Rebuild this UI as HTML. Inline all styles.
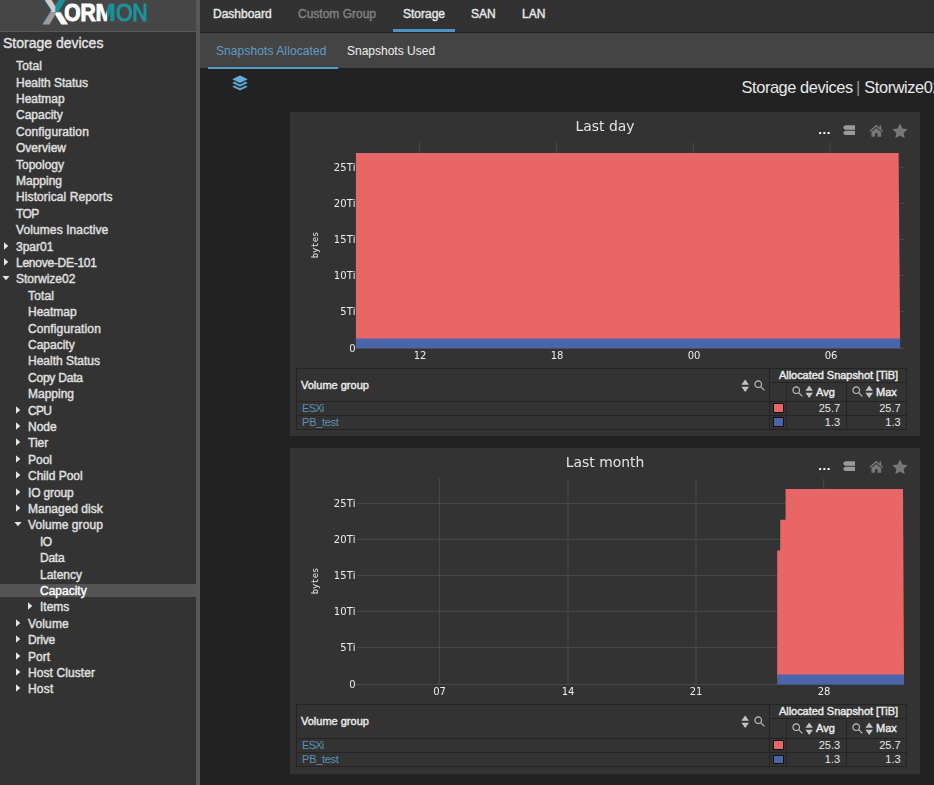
<!DOCTYPE html>
<html lang="en"><head><meta charset="utf-8"><title>XorMon - Storage devices | Storwize02</title>
<style>
*{box-sizing:border-box}
html,body{margin:0;padding:0}
body{width:934px;height:785px;overflow:hidden;background:#222;font-family:"Liberation Sans",Arial,sans-serif;font-size:12px;color:#e6e6e6;position:relative}
#side{position:absolute;left:0;top:0;width:196px;height:785px;background:#333;overflow:hidden}
#logo{position:absolute;left:0;top:0;width:196px;height:32px;background:#464646;border-bottom:1px solid #585858}
#split{position:absolute;left:195.8px;top:0;width:3.8px;height:785px;background:#575757}
#side h2{position:absolute;left:3px;top:34px;margin:0;font-size:14px;line-height:18px;font-weight:normal;color:#e4e4e4;-webkit-text-stroke:0.35px #e4e4e4;white-space:nowrap}
.it{position:absolute;white-space:nowrap;line-height:16px;font-size:12px;color:#e0e0e0;-webkit-text-stroke:0.4px #e0e0e0}
.it.act{color:#fff;-webkit-text-stroke:0.4px #fff}
.hl{position:absolute;left:0;width:196px;height:13.2px;background:#555;margin-top:0.6px}
.ar{position:absolute;width:4.8px;height:8px;background:#e4e4e4;clip-path:polygon(0 0,100% 50%,0 100%)}
.ad{position:absolute;width:7.6px;height:4.6px;background:#e4e4e4;clip-path:polygon(0 0,100% 0,50% 100%)}
#nav{position:absolute;left:200px;top:0;width:734px;height:33px;background:#323232;border-bottom:1.4px solid #1f1f1f}
#nav a{position:absolute;top:7.4px;line-height:14px;font-size:12px;color:#e8e8e8;-webkit-text-stroke:0.4px #e8e8e8;white-space:nowrap;text-decoration:none}
#nav a.dim{color:#828282;-webkit-text-stroke:0.4px #828282}
#nav .ul{position:absolute;left:193px;top:29.4px;width:62px;height:2.2px;background:#4d93c4}
#tabs{position:absolute;left:200px;top:33px;width:734px;height:35px;background:#444}
#tabs a{position:absolute;top:10.8px;line-height:14px;font-size:12px;color:#f0f0f0;white-space:nowrap;text-decoration:none}
#tabs a.on{color:#609dc9;letter-spacing:0.09px}
#tabs .ul{position:absolute;left:8px;top:33.6px;width:130px;height:2.6px;background:#5699c8}
#crumb{position:absolute;left:741.6px;top:78px;font-size:16.4px;letter-spacing:-0.43px;line-height:18px;color:#e8e8e8;white-space:nowrap}
#crumb i{font-style:normal;color:#9a9a9a;margin:0 0.4px 0 -0.8px}
#layers{position:absolute;left:232.4px;top:75.4px;width:16px;height:16.4px}
.card{position:absolute;left:290px;width:630px;height:324px;background:#333}
.card .plot{position:absolute;left:0;top:0}
.grid line{stroke:#4a4a4a;stroke-width:1}
.ttl{position:absolute;left:0;top:5px;width:630px;text-align:center;font-family:"DejaVu Sans",Verdana,sans-serif;font-size:13.9px;line-height:18px;color:#e4e4e4}
.dots{position:absolute;left:527.8px;top:9.6px;font-family:"DejaVu Sans",sans-serif;font-weight:bold;font-size:11px;line-height:18px;color:#f4f4f4;letter-spacing:0.1px}
.ic{position:absolute;fill:#787878}
.ic1{left:553px;top:13.2px;width:12.2px;height:10.4px;fill:#9a9a9a}
.ic2{left:578.8px;top:12px;width:14.6px;height:13.4px}
.ic3{left:602.4px;top:11.2px;width:16px;height:15.6px}
.ttl,.yl,.xls,.by,.dots{will-change:transform}
.yl,.xl,.by{font-family:"DejaVu Sans",Verdana,sans-serif;font-size:10px;line-height:14px;color:#ececec}
.yl{position:absolute;left:30px;width:35.8px;text-align:right;letter-spacing:0.2px}
.xls{position:absolute;left:0;top:236px;width:630px;height:16px}
.xl{position:absolute;top:1.3px;width:40px;text-align:center;margin-left:1px}
.by{position:absolute;left:3px;top:126.4px;width:44px;text-align:center;transform:rotate(-90deg);font-family:"DejaVu Sans Mono","Liberation Mono",monospace;font-size:8.8px}
.tb{position:absolute;left:5.5px;top:255.5px;width:610.5px;border-collapse:collapse;table-layout:fixed;font-size:11px}
.tb th,.tb td{border:1px solid #242424;padding:0;margin:0;line-height:12px;overflow:hidden;white-space:nowrap}
.tb th{font-weight:normal;color:#ececec;-webkit-text-stroke:0.4px #ececec;text-align:center;font-size:11px}
.tb .h1 th{height:14px}
.tb .h2 th{height:inherit}
.tb td{height:14px}
.tb tr.r1 td{height:inherit}
.tb th.vg{text-align:left;padding-left:4.5px;position:relative}
.tb td.nm{color:#5b8fb5;padding-left:5.6px;letter-spacing:-0.3px}
.nx{letter-spacing:-0.75px}
.tb td.nu{text-align:right;padding-right:5.4px;color:#e6e6e6}
.tb td.sw{text-align:left}
.tb td.sw b{display:block;width:11px;height:9.6px;margin:0 0 0 3px;border:1px solid #111}
.vgi{position:absolute;right:4.2px;top:10px}
.vgi .so{margin-right:4.4px}
.tb th.hc{text-align:left;padding-left:5.6px}
.tb th.hc span{margin-left:0.6px}
.tb th.as{letter-spacing:-0.04px;padding-left:1px}
.so{width:8.4px;height:13.4px;fill:#c4c4c4;vertical-align:middle;margin:0 2px}
.mg{width:11px;height:11px;fill:none;stroke:#c0c0c0;stroke-width:1.25;vertical-align:middle;margin:0}
.tb th span{vertical-align:middle}
</style></head>
<body>
<div id="side">
<div id="logo">
<svg width="196" height="31" viewBox="0 0 196 31" font-family="Liberation Sans, Arial, sans-serif"><defs><linearGradient id="mg" gradientUnits="userSpaceOnUse" x1="96" x2="116" y1="0" y2="0"><stop offset="0.55" stop-color="#fff"/><stop offset="0.55" stop-color="#18909c"/></linearGradient>
<pattern id="xq" patternUnits="userSpaceOnUse" x="0" y="-10" width="196" height="60"><rect x="0" y="0" width="55.6" height="22.3" fill="#cfcfcf"/><rect x="0" y="22.3" width="55.6" height="38" fill="#9c9c9c"/><rect x="55.6" y="0" width="140" height="22.3" fill="#1a8e9b"/><rect x="55.6" y="22.3" width="140" height="38" fill="#fff"/></pattern></defs>
<text y="21.2" font-size="24"><tspan x="43" y="24.4" font-size="37" font-weight="bold" fill="url(#xq)" stroke="url(#xq)" stroke-width="1.0" textLength="24.4" lengthAdjust="spacingAndGlyphs">X</tspan><tspan x="64.2" y="21.2" font-weight="bold" fill="#fff" stroke="#fff" stroke-width="1.1" textLength="31.5" lengthAdjust="spacingAndGlyphs">OR</tspan><tspan x="95.2" y="21.2" font-weight="bold" fill="url(#mg)" stroke="url(#mg)" stroke-width="0.6" textLength="20.5" lengthAdjust="spacingAndGlyphs">M</tspan><tspan x="116.2" y="21.2" fill="#18949f" stroke="#18949f" stroke-width="1.1" textLength="31.5" lengthAdjust="spacingAndGlyphs">ON</tspan></text></svg>
</div>
<h2>Storage devices</h2>
<span class="it" style="left:16px;top:58px;letter-spacing:0.15px">Total</span>
<span class="it" style="left:16px;top:75px">Health Status</span>
<span class="it" style="left:16px;top:91px">Heatmap</span>
<span class="it" style="left:16px;top:107px">Capacity</span>
<span class="it" style="left:16px;top:124px;letter-spacing:0.12px">Configuration</span>
<span class="it" style="left:16px;top:140px">Overview</span>
<span class="it" style="left:16px;top:157px">Topology</span>
<span class="it" style="left:16px;top:173px">Mapping</span>
<span class="it" style="left:16px;top:189px;letter-spacing:0.1px">Historical Reports</span>
<span class="it" style="left:16px;top:206px;letter-spacing:-0.55px">TOP</span>
<span class="it" style="left:16px;top:222px;letter-spacing:0.1px">Volumes Inactive</span>
<i class="ar" style="left:3.6px;top:242.1px"></i><span class="it" style="left:16px;top:239px">3par01</span>
<i class="ar" style="left:3.6px;top:258.1px"></i><span class="it" style="left:16px;top:255px;letter-spacing:-0.26px">Lenove-DE-101</span>
<i class="ad" style="left:2.2px;top:275.7px"></i><span class="it" style="left:16px;top:271px">Storwize02</span>
<span class="it" style="left:28px;top:288px;letter-spacing:0.15px">Total</span>
<span class="it" style="left:28px;top:304px">Heatmap</span>
<span class="it" style="left:28px;top:321px;letter-spacing:0.12px">Configuration</span>
<span class="it" style="left:28px;top:337px">Capacity</span>
<span class="it" style="left:28px;top:353px">Health Status</span>
<span class="it" style="left:28px;top:370px;letter-spacing:-0.22px">Copy Data</span>
<span class="it" style="left:28px;top:386px">Mapping</span>
<i class="ar" style="left:15.6px;top:406.1px"></i><span class="it" style="left:28px;top:403px;letter-spacing:-0.7px">CPU</span>
<i class="ar" style="left:15.6px;top:422.1px"></i><span class="it" style="left:28px;top:419px">Node</span>
<i class="ar" style="left:15.6px;top:438.1px"></i><span class="it" style="left:28px;top:435px">Tier</span>
<i class="ar" style="left:15.6px;top:455.1px"></i><span class="it" style="left:28px;top:452px">Pool</span>
<i class="ar" style="left:15.6px;top:471.1px"></i><span class="it" style="left:28px;top:468px">Child Pool</span>
<i class="ar" style="left:15.6px;top:488.1px"></i><span class="it" style="left:28px;top:485px;letter-spacing:-0.15px">IO group</span>
<i class="ar" style="left:15.6px;top:504.1px"></i><span class="it" style="left:28px;top:501px">Managed disk</span>
<i class="ad" style="left:14.2px;top:521.7px"></i><span class="it" style="left:28px;top:517px;letter-spacing:0.07px">Volume group</span>
<span class="it" style="left:40px;top:534px;letter-spacing:-0.5px">IO</span>
<span class="it" style="left:40px;top:550px;letter-spacing:-0.25px">Data</span>
<span class="it" style="left:40px;top:567px">Latency</span>
<div class="hl" style="top:583.7px"></div><span class="it act" style="left:40px;top:583px">Capacity</span>
<i class="ar" style="left:27.6px;top:602.1px"></i><span class="it" style="left:40px;top:599px">Items</span>
<i class="ar" style="left:15.6px;top:619.1px"></i><span class="it" style="left:28px;top:616px;letter-spacing:0.13px">Volume</span>
<i class="ar" style="left:15.6px;top:635.1px"></i><span class="it" style="left:28px;top:632px;letter-spacing:-0.18px">Drive</span>
<i class="ar" style="left:15.6px;top:652.1px"></i><span class="it" style="left:28px;top:649px">Port</span>
<i class="ar" style="left:15.6px;top:668.1px"></i><span class="it" style="left:28px;top:665px;letter-spacing:0.08px">Host Cluster</span>
<i class="ar" style="left:15.6px;top:684.1px"></i><span class="it" style="left:28px;top:681px;letter-spacing:0.2px">Host</span>
</div>
<div id="split"></div>
<div id="nav"><a style="left:13px">Dashboard</a><a class="dim" style="left:98px">Custom Group</a><a style="left:203px">Storage</a><a style="left:271px">SAN</a><a style="left:322px">LAN</a><div class="ul"></div></div>
<div id="tabs"><a class="on" style="left:16px">Snapshots Allocated</a><a style="left:147px">Snapshots Used</a><div class="ul"></div></div>
<svg id="layers" viewBox="0 0 16 16.4" preserveAspectRatio="none"><path d="M8 0.4L0.3 4.2 8 8l7.7-3.8z" fill="#62aee0"/><path d="M2.2 6.6L0.3 7.9 8 11.7l7.7-3.8-1.9-1.3L8 9.4z" fill="#5fa6d6"/><path d="M2.2 10.4L0.3 11.7 8 15.5l7.7-3.8-1.9-1.3L8 13.2z" fill="#5fa6d6"/></svg>
<div id="crumb">Storage devices <i>|</i> Storwize02</div>
<div class="card" style="top:112px;height:324px">
<table class="tb"><colgroup><col style="width:473.5px"><col style="width:16.5px"><col style="width:60px"><col style="width:60.5px"></colgroup>
<tr class="h1"><th class="vg" rowspan="2">Volume group<span class="vgi"><svg class="so" viewBox="0 0 8 13" preserveAspectRatio="none"><path d="M4 0.5L7.6 5.5H0.4zM4 12.5L0.4 7.5H7.6z"/></svg><svg class="mg" viewBox="0 0 12 12"><circle cx="4.6" cy="4.6" r="3.6"/><path d="M7.3 7.3L11.3 11.3"/></svg></span></th><th colspan="3" class="as">Allocated Snapshot [TiB]</th></tr>
<tr class="h2" style="height:19px"><th></th><th class="hc"><svg class="mg" viewBox="0 0 12 12"><circle cx="4.6" cy="4.6" r="3.6"/><path d="M7.3 7.3L11.3 11.3"/></svg><svg class="so" viewBox="0 0 8 13" preserveAspectRatio="none"><path d="M4 0.5L7.6 5.5H0.4zM4 12.5L0.4 7.5H7.6z"/></svg><span>Avg</span></th><th class="hc"><svg class="mg" viewBox="0 0 12 12"><circle cx="4.6" cy="4.6" r="3.6"/><path d="M7.3 7.3L11.3 11.3"/></svg><svg class="so" viewBox="0 0 8 13" preserveAspectRatio="none"><path d="M4 0.5L7.6 5.5H0.4zM4 12.5L0.4 7.5H7.6z"/></svg><span>Max</span></th></tr>
<tr class="r0"><td class="nm"><span class="nx">ESXi</span></td><td class="sw"><b style="background:#e96666"></b></td><td class="nu">25.7</td><td class="nu">25.7</td></tr><tr class="r1" style="height:14px"><td class="nm">PB_test</td><td class="sw"><b style="background:#4a65a9"></b></td><td class="nu">1.3</td><td class="nu">1.3</td></tr>
</table>
<div class="ttl">Last day</div>
<span class="dots">...</span>
<svg class="ic ic1" viewBox="0 0 14 12" preserveAspectRatio="none"><path d="M2.2 0.4H14V5.4H2.2L0 2.9zM2.2 6.6H14V11.6H2.2L0 9.1z"/></svg>
<svg class="ic ic2" viewBox="0 0 16 14" preserveAspectRatio="none"><path d="M8 0.8L0.3 7.3l1 1.1L8 2.9l6.7 5.5 1-1.1-2.2-1.8V1.6h-2v2.2zM2.7 8.4V13.4h3.9V9.6h2.8v3.8h3.9V8.4L8 4.1z"/></svg>
<svg class="ic ic3" viewBox="0 0 16 15"><path d="M8 0.3l2.3 4.9 5.4 0.7-4 3.7 1 5.3L8 12.3l-4.7 2.6 1-5.3-4-3.7 5.4-0.7z"/></svg>
<svg class="plot" width="630" height="260" viewBox="0 0 630 260"><g class="grid"><line x1="67" x2="614" y1="55.4" y2="55.4"/><line x1="67" x2="614" y1="91.4" y2="91.4"/><line x1="67" x2="614" y1="127.4" y2="127.4"/><line x1="67" x2="614" y1="163.4" y2="163.4"/><line x1="67" x2="614" y1="199.4" y2="199.4"/><line x1="64" x2="614" y1="236.4" y2="236.4"/><line x1="129.6" x2="129.6" y1="30.5" y2="237"/><line x1="266.4" x2="266.4" y1="30.5" y2="237"/><line x1="403.4" x2="403.4" y1="30.5" y2="237"/><line x1="540.0" x2="540.0" y1="30.5" y2="237"/></g><path d="M65.9 41H608.6L610.1 230H65.9z" fill="#e96666"/><path d="M65.9 226.6H610.1L610.2 236.2H65.9z" fill="#4a65a9"/></svg>
<span class="yl" style="top:48.6px">25Ti</span><span class="yl" style="top:84.6px">20Ti</span><span class="yl" style="top:120.6px">15Ti</span><span class="yl" style="top:156.6px">10Ti</span><span class="yl" style="top:192.6px">5Ti</span><span class="yl" style="top:229.6px">0</span><span class="by">bytes</span><div class="xls"><span class="xl" style="left:109px">12</span><span class="xl" style="left:246px">18</span><span class="xl" style="left:383px">00</span><span class="xl" style="left:520px">06</span></div>
</div>
<div class="card" style="top:448px;height:325.6px">
<table class="tb"><colgroup><col style="width:473.5px"><col style="width:16.5px"><col style="width:60px"><col style="width:60.5px"></colgroup>
<tr class="h1"><th class="vg" rowspan="2">Volume group<span class="vgi"><svg class="so" viewBox="0 0 8 13" preserveAspectRatio="none"><path d="M4 0.5L7.6 5.5H0.4zM4 12.5L0.4 7.5H7.6z"/></svg><svg class="mg" viewBox="0 0 12 12"><circle cx="4.6" cy="4.6" r="3.6"/><path d="M7.3 7.3L11.3 11.3"/></svg></span></th><th colspan="3" class="as">Allocated Snapshot [TiB]</th></tr>
<tr class="h2" style="height:20px"><th></th><th class="hc"><svg class="mg" viewBox="0 0 12 12"><circle cx="4.6" cy="4.6" r="3.6"/><path d="M7.3 7.3L11.3 11.3"/></svg><svg class="so" viewBox="0 0 8 13" preserveAspectRatio="none"><path d="M4 0.5L7.6 5.5H0.4zM4 12.5L0.4 7.5H7.6z"/></svg><span>Avg</span></th><th class="hc"><svg class="mg" viewBox="0 0 12 12"><circle cx="4.6" cy="4.6" r="3.6"/><path d="M7.3 7.3L11.3 11.3"/></svg><svg class="so" viewBox="0 0 8 13" preserveAspectRatio="none"><path d="M4 0.5L7.6 5.5H0.4zM4 12.5L0.4 7.5H7.6z"/></svg><span>Max</span></th></tr>
<tr class="r0"><td class="nm"><span class="nx">ESXi</span></td><td class="sw"><b style="background:#e96666"></b></td><td class="nu">25.3</td><td class="nu">25.7</td></tr><tr class="r1" style="height:14.6px"><td class="nm">PB_test</td><td class="sw"><b style="background:#4a65a9"></b></td><td class="nu">1.3</td><td class="nu">1.3</td></tr>
</table>
<div class="ttl">Last month</div>
<span class="dots">...</span>
<svg class="ic ic1" viewBox="0 0 14 12" preserveAspectRatio="none"><path d="M2.2 0.4H14V5.4H2.2L0 2.9zM2.2 6.6H14V11.6H2.2L0 9.1z"/></svg>
<svg class="ic ic2" viewBox="0 0 16 14" preserveAspectRatio="none"><path d="M8 0.8L0.3 7.3l1 1.1L8 2.9l6.7 5.5 1-1.1-2.2-1.8V1.6h-2v2.2zM2.7 8.4V13.4h3.9V9.6h2.8v3.8h3.9V8.4L8 4.1z"/></svg>
<svg class="ic ic3" viewBox="0 0 16 15"><path d="M8 0.3l2.3 4.9 5.4 0.7-4 3.7 1 5.3L8 12.3l-4.7 2.6 1-5.3-4-3.7 5.4-0.7z"/></svg>
<svg class="plot" width="630" height="260" viewBox="0 0 630 260"><g class="grid"><line x1="67" x2="614" y1="55.4" y2="55.4"/><line x1="67" x2="614" y1="91.4" y2="91.4"/><line x1="67" x2="614" y1="127.4" y2="127.4"/><line x1="67" x2="614" y1="163.4" y2="163.4"/><line x1="67" x2="614" y1="199.4" y2="199.4"/><line x1="64" x2="614" y1="236.4" y2="236.4"/><line x1="149.6" x2="149.6" y1="30.5" y2="237"/><line x1="278.0" x2="278.0" y1="30.5" y2="237"/><line x1="406.0" x2="406.0" y1="30.5" y2="237"/><line x1="533.7" x2="533.7" y1="30.5" y2="237"/></g><path d="M487.2 230V102.5h3V71.7h5.4V41H613L614 230z" fill="#e96666"/><path d="M487.2 226.4H614L614.1 236.5H487.2z" fill="#4a65a9"/></svg>
<span class="yl" style="top:48.6px">25Ti</span><span class="yl" style="top:84.6px">20Ti</span><span class="yl" style="top:120.6px">15Ti</span><span class="yl" style="top:156.6px">10Ti</span><span class="yl" style="top:192.6px">5Ti</span><span class="yl" style="top:229.6px">0</span><span class="by">bytes</span><div class="xls"><span class="xl" style="left:128.60000000000002px">07</span><span class="xl" style="left:257px">14</span><span class="xl" style="left:385px">21</span><span class="xl" style="left:513px">28</span></div>
</div>
</body></html>
